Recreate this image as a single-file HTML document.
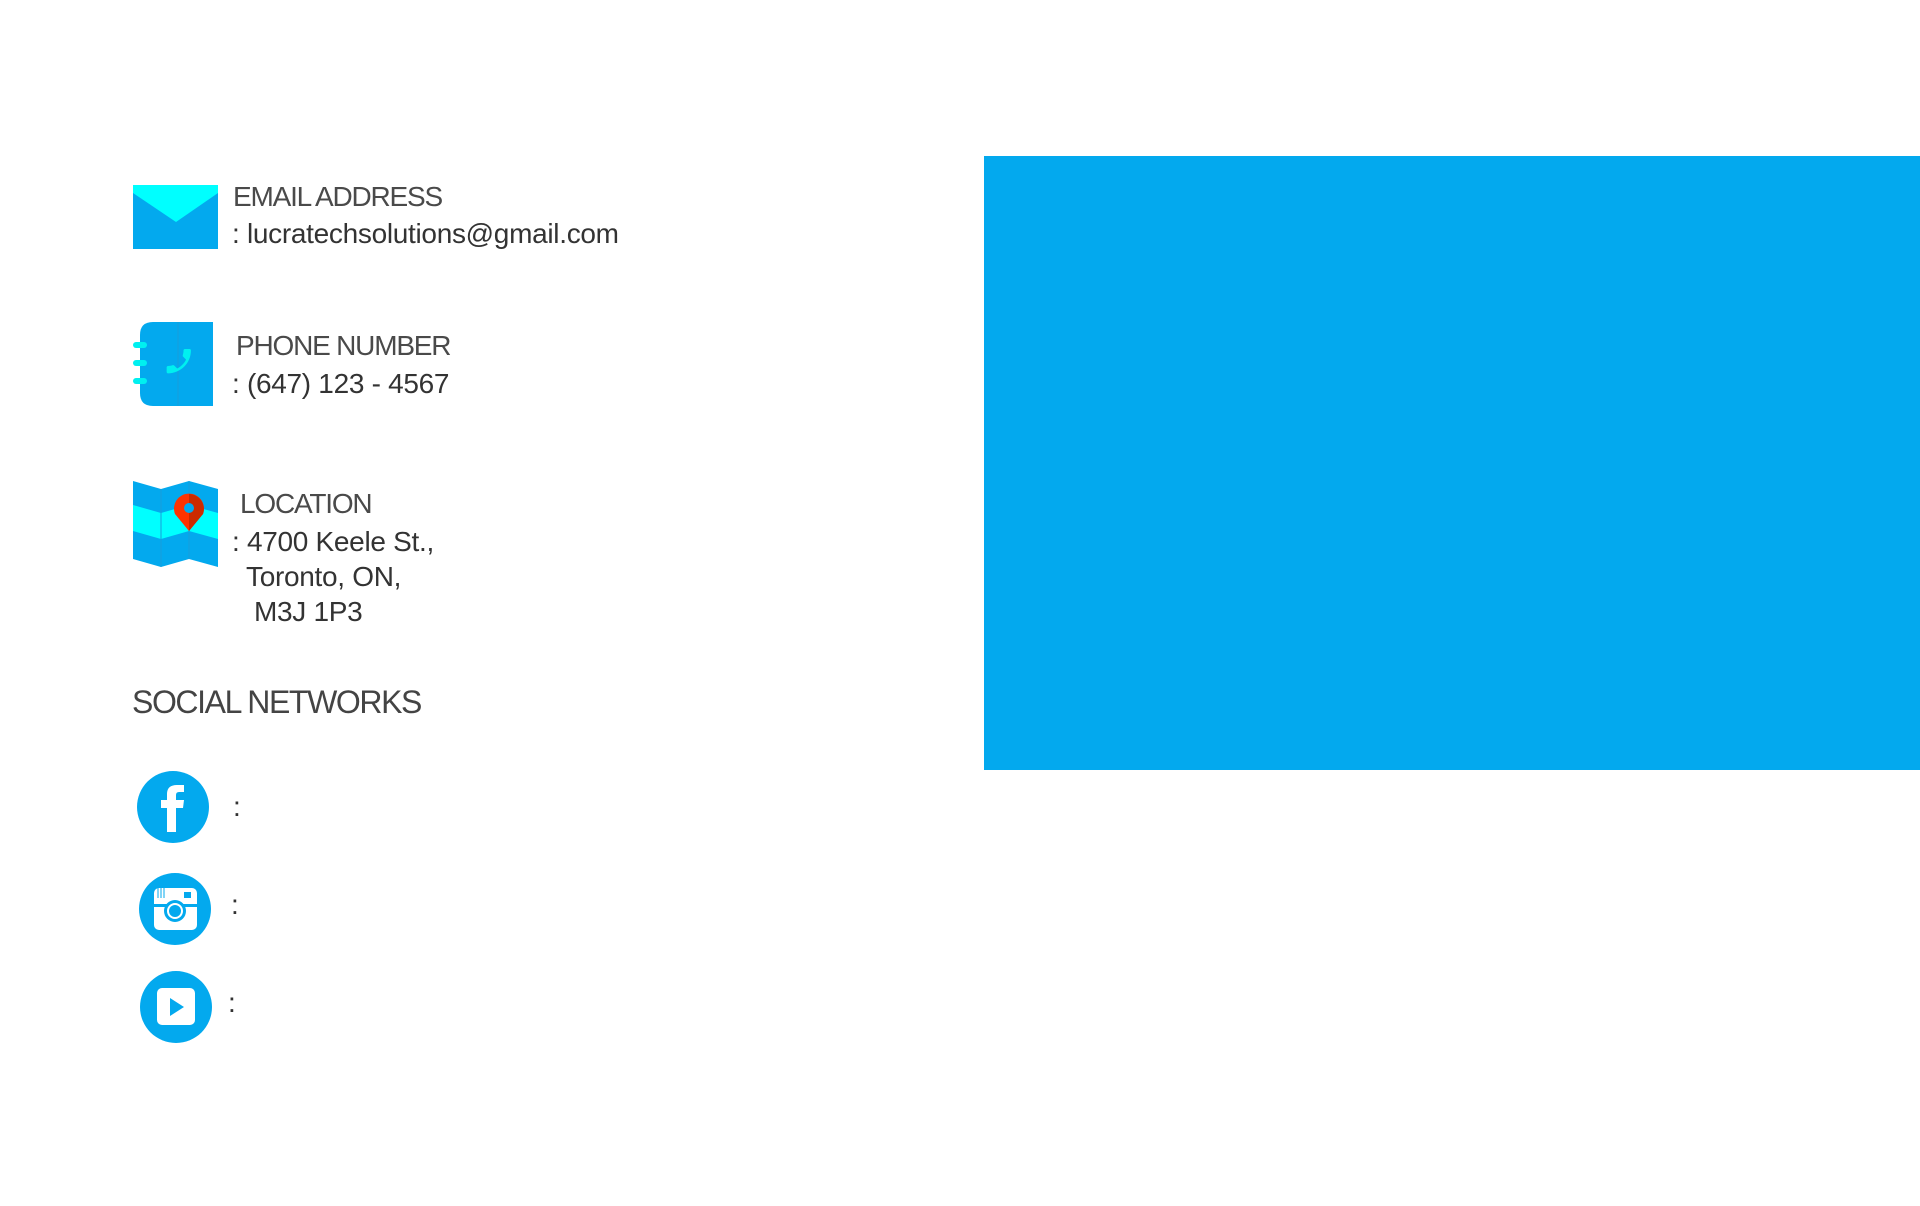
<!DOCTYPE html>
<html><head><meta charset="utf-8"><style>
html,body{margin:0;padding:0;background:#fff;width:1920px;height:1206px;overflow:hidden;position:relative;font-family:"Liberation Sans",sans-serif;color:#3a3a3a}
.t{position:absolute;white-space:nowrap;line-height:1}
.h{font-size:28px;letter-spacing:-1.2px;color:#4a4a4a}
.v{font-size:28px;letter-spacing:-0.3px;color:#333}
svg{position:absolute}
</style></head><body>
<div style="position:absolute;left:984px;top:156px;width:936px;height:614px;background:#03a9ee"></div>

<svg style="left:133px;top:185px" width="85" height="64" viewBox="0 0 85 64">
<rect width="85" height="64" fill="#03a9ee"/><path d="M0 0H85V8L43 37L0 8Z" fill="#00ffff"/></svg>
<div class="t h" style="left:233px;top:183px">EMAIL ADDRESS</div>
<div class="t v" style="left:232px;top:220px">: lucratechsolutions@gmail.com</div>

<svg style="left:133px;top:322px" width="80" height="84" viewBox="0 0 80 84">
<path d="M20 0H80V84H20Q7 84 7 71V13Q7 0 20 0Z" fill="#03a9ee"/>
<line x1="45" y1="0" x2="45" y2="84" stroke="#1a9ddb" stroke-width="1"/>
<g stroke="#00f0f0" stroke-width="6" stroke-linecap="round"><line x1="3" y1="23" x2="11" y2="23"/><line x1="3" y1="41" x2="11" y2="41"/><line x1="3" y1="59" x2="11" y2="59"/></g>
<g transform="translate(62 23) scale(-1.35 1.35)"><path d="M6.62 10.79c1.44 2.83 3.76 5.14 6.59 6.59l2.2-2.2c.27-.27.67-.36 1.02-.24 1.12.37 2.33.57 3.57.57.55 0 1 .45 1 1V20c0 .55-.45 1-1 1-9.39 0-17-7.61-17-17 0-.55.45-1 1-1h3.5c.55 0 1 .45 1 1 0 1.250.2 2.45.57 3.57.11.35.03.74-.25 1.02l-2.2 2.2z" fill="#00f0f0"/></g></svg>
<div class="t h" style="left:236px;top:332px">PHONE NUMBER</div>
<div class="t v" style="left:232px;top:370px">: (647) 123 - 4567</div>

<svg style="left:133px;top:481px" width="85" height="86" viewBox="0 0 85 86">
<path d="M0 0L28 8L56 0L85 8V86L56 78L28 86L0 78Z" fill="#03a9ee"/>
<path d="M0 24L28 32L56 24L85 32V58L56 50L28 58L0 50Z" fill="#00ffff"/>
<line x1="28" y1="8" x2="28" y2="86" stroke="#1a9ddb"/><line x1="56" y1="0" x2="56" y2="78" stroke="#1a9ddb"/>
<path d="M56 50L42 33A15 15 0 1 1 70 33Z" fill="#ff3300"/><path d="M56 50V13A15 15 0 0 1 70 33Z" fill="#cc2a00"/>
<circle cx="56" cy="27" r="5" fill="#03a9ee"/></svg>
<div class="t h" style="left:240px;top:490px">LOCATION</div>
<div class="t v" style="left:232px;top:528px">: 4700 Keele St.,</div>
<div class="t v" style="left:246px;top:563px">Toronto, ON,</div>
<div class="t v" style="left:254px;top:598px">M3J 1P3</div>

<div class="t" style="left:132px;top:686px;font-size:32px;letter-spacing:-1.4px;color:#444">SOCIAL NETWORKS</div>

<svg style="left:137px;top:771px" width="72" height="72" viewBox="0 0 72 72">
<circle cx="36" cy="36" r="36" fill="#03a9ee"/>
<path d="M30 61V37H24V29H30V23Q30 14 40 14H47V21H42Q39 21 39 24V29H47L46 37H39V61Z" fill="#fff"/></svg>
<div class="t v" style="left:233px;top:793px">:</div>

<svg style="left:139px;top:873px" width="72" height="72" viewBox="0 0 72 72">
<circle cx="36" cy="36" r="36" fill="#03a9ee"/>
<rect x="15" y="15" width="43" height="42" rx="5" fill="#fff"/>
<rect x="15" y="31" width="43" height="3" fill="#03a9ee"/>
<circle cx="36" cy="38" r="11" fill="#03a9ee"/><circle cx="36" cy="38" r="8" fill="#fff"/><circle cx="36" cy="38" r="6" fill="#03a9ee"/>
<rect x="45" y="19" width="7" height="6" fill="#03a9ee"/>
<g stroke="#03a9ee" stroke-width="1"><line x1="19" y1="15" x2="19" y2="25"/><line x1="22" y1="15" x2="22" y2="25"/><line x1="25" y1="15" x2="25" y2="25"/></g></svg>
<div class="t v" style="left:231px;top:891px">:</div>

<svg style="left:140px;top:971px" width="72" height="72" viewBox="0 0 72 72">
<circle cx="36" cy="36" r="36" fill="#03a9ee"/>
<rect x="17" y="17" width="38" height="37" rx="5" fill="#fff"/>
<path d="M30 27V45L44 36Z" fill="#03a9ee"/></svg>
<div class="t v" style="left:228px;top:989px">:</div>
</body></html>
